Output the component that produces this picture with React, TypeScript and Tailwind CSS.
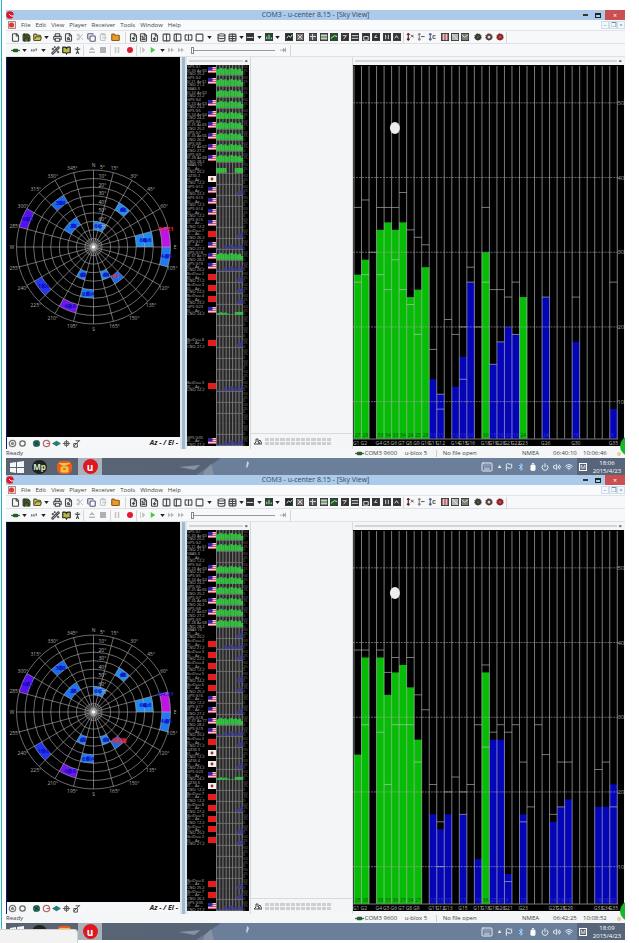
import type { ReactNode } from 'react';
import {
  File, Save, FolderOpen, Printer, FileSearch, Scissors, Copy, ClipboardPaste, Folder,
  FileUp, FileText, FileDown, Columns2, PanelLeft, SquareSplitHorizontal, Square,
  Database, Table, BatteryFull, Flag, Bluetooth, Volume2, Wifi, Power, Keyboard,
  Wand2, BookOpen, PersonStanding,
} from 'lucide-react';

type Bar = [col: number, value: number, color?: 'g' | 'b'];
type Tick = [col: number, value: number];
type Row = { flag?: 'us' | 'cn' | 'jp'; text?: boolean; fill?: 'full' | 'split' | 'low' | 'blue' | 'dim' };

const GREEN = '#06bd06';
const BLUE = '#0505b8';

const barsA: Bar[] = [
  [0, 27, 'g'], [1, 29, 'g'], [3, 33, 'g'], [4, 34, 'g'], [5, 33, 'g'], [6, 34, 'g'], [7, 24, 'g'], [8, 25, 'g'],
  [9, 28, 'g'], [10, 13], [11, 11], [13, 12], [14, 16], [15, 26], [17, 30, 'g'], [18, 15], [19, 18], [20, 20],
  [21, 19], [22, 24, 'g'], [25, 24], [29, 18], [34, 9],
];
const ticksA: Tick[] = [
  [0, 36], [0, 26], [1, 37], [1, 27], [2, 30], [3, 36], [3, 27], [4, 36], [4, 25], [5, 36], [5, 29], [6, 38], [6, 25],
  [7, 33], [7, 23], [8, 32], [8, 19], [9, 31], [10, 17], [11, 9], [11, 11], [12, 21], [13, 19], [14, 20], [14, 13],
  [15, 28], [15, 26], [16, 20], [17, 36], [17, 26], [18, 25], [18, 15], [19, 25], [19, 18], [20, 24], [21, 26],
  [21, 19], [25, 24], [29, 24], [34, 26],
];
const barsB: Bar[] = [
  [0, 25, 'g'], [1, 38, 'g'], [3, 38, 'g'], [4, 33, 'g'], [5, 36, 'g'], [6, 37, 'g'], [7, 34, 'g'], [8, 27, 'g'],
  [10, 17], [11, 15], [12, 17], [14, 17], [16, 11], [17, 36, 'g'], [18, 27], [19, 27], [20, 9], [22, 17], [26, 16],
  [27, 18], [28, 19], [32, 18], [33, 18], [34, 21],
];
const ticksB: Tick[] = [
  [0, 39], [1, 39], [1, 29], [3, 39], [3, 28], [4, 36], [4, 21], [5, 38], [5, 29], [6, 29], [7, 38], [7, 29], [8, 33],
  [8, 24], [9, 31], [10, 21], [11, 16], [11, 10], [12, 20], [13, 22], [14, 20], [14, 17], [15, 21], [16, 29], [17, 37],
  [17, 26], [18, 28], [19, 29], [20, 28], [20, 8], [21, 29], [22, 24], [22, 16], [23, 18], [24, 29], [25, 25],
  [26, 17], [27, 24], [27, 18], [28, 24], [32, 23], [33, 24], [34, 18],
];

const us = (fill?: Row['fill']): Row => ({ flag: 'us', text: true, fill });
const cn = (fill?: Row['fill']): Row => ({ flag: 'cn', text: true, fill });
const jp = (fill?: Row['fill']): Row => ({ flag: 'jp', text: true, fill });
const none = (fill?: Row['fill']): Row => ({ text: true, fill });
const empty: Row = {};

const rowsA: Row[] = [
  us('full'), us('full'), none('full'), us('full'), us('full'), us('full'), us('full'), us('full'), us('full'),
  none('split'), jp(), us('dim'), us(), us(), us(), cn('dim'), us('blue'), us('full'), us('blue'), cn('dim'),
  cn('dim'), cn('dim'), us('low'), empty, empty, cn('dim'), empty, empty, empty, cn('blue'), empty, empty, empty,
  empty, us('blue'),
];
const rowsB: Row[] = [
  us('full'), us('full'), none(), us('full'), us('full'), us('full'), us('full'), us('full'), us('full'), none('dim'),
  cn('blue'), cn('dim'), cn(), cn('dim'), cn('dim'), us(), us('dim'), us('full'), us('blue'), cn('dim'), jp(),
  jp('dim'), us('low'), jp(), cn(), cn('dim'), cn(), cn('dim'), cn('dim'), empty, empty, empty, cn('dim'),
  cn('dim'), us('blue'),
];

const W = 7.54;
const yOf = (v: number) => 374 - (v - 5) * 7.47;

function SignalChart({ bars, ticks }: { bars: Bar[]; ticks: Tick[] }) {
  return (
    <svg viewBox="0 0 272 381" preserveAspectRatio="none" className="block h-[381px] w-full bg-black" role="img" aria-label="Signal levels">
      {bars.map(([c, v, k]) => (
        <rect key={c} x={1 + c * W} y={yOf(v)} width={W} height={374 - yOf(v)} fill={k === 'g' ? GREEN : BLUE} />
      ))}
      {Array.from({ length: 36 }, (_, i) => (
        <line key={i} x1={1 + i * W} x2={1 + i * W} y1="1" y2="374" stroke="#c8c8c8" strokeOpacity=".62" strokeWidth="1" />
      ))}
      {[50, 40, 30, 20, 10].map((v) => (
        <g key={v}>
          <line x1="0" x2="266" y1={yOf(v)} y2={yOf(v)} stroke="#a8a8a8" strokeOpacity=".6" strokeWidth="1" strokeDasharray="2 1" />
          <text x="265" y={yOf(v) + 2} fontSize="6" fill="#a0a0a0">{v}</text>
        </g>
      ))}
      {ticks.map(([c, v], i) => (
        <line key={i} x1={1 + c * W} x2={1 + (c + 1) * W} y1={yOf(v)} y2={yOf(v)} stroke="#c8c8c8" strokeOpacity=".6" strokeWidth="1" />
      ))}
      <line x1="0" x2="266" y1="374" y2="374" stroke="#777" />
      {bars.map(([c, v, k]) => (
        <text key={c} x={2 + c * W} y="372" fontSize="5" fill={k === 'g' ? '#064d06' : '#3434d8'}>{v}</text>
      ))}
      {bars.map(([c]) => (
        <text key={c} x={c * W} y="380" fontSize="5" fill="#b5b5b5">{'G' + (c + 1)}</text>
      ))}
      <ellipse cx="42" cy="63" rx="5" ry="6" fill="#eee" />
    </svg>
  );
}

const CX = 87;
const CY = 190;
const RING = 8.6;
const pt = (az: number, r: number) => {
  const a = (az * Math.PI) / 180;
  return [CX + r * Math.sin(a), CY - r * Math.cos(a)];
};
const sector = (a0: number, a1: number, k0: number, k1: number) => {
  const r0 = k0 * RING;
  const r1 = k1 * RING;
  const [x1, y1] = pt(a0, r0);
  const [x2, y2] = pt(a0, r1);
  const [x3, y3] = pt(a1, r1);
  const [x4, y4] = pt(a1, r0);
  return `M${x1} ${y1}L${x2} ${y2}A${r1} ${r1} 0 0 1 ${x3} ${y3}L${x4} ${y4}A${r0} ${r0} 0 0 0 ${x1} ${y1}Z`;
};
const cells: [number, number, number, number, string, string][] = [
  [315, 330, 6, 7, '#1769ee', '328'], [285, 300, 8, 9, '#5a10ee', '4.62'], [300, 330, 3, 4, '#1c73ef', '28'],
  [0, 30, 2, 3, '#2487f0', '6'], [30, 45, 5, 6, '#278bee', '66'], [75, 90, 5, 7, '#208bee', '68.6'],
  [75, 90, 8, 9, '#c014e6', ''], [90, 105, 8, 9, '#2278ef', '4.05'], [195, 210, 3, 4, '#2180ec', '63'],
  [180, 195, 5, 6, '#1c78ee', '68 A'], [150, 165, 3, 4, '#218cf0', '64'], [135, 150, 4, 5, '#176cec', ''],
  [225, 240, 7, 8, '#2435ef', '11.6'], [195, 210, 7, 8, '#7415e8', '42.8'],
];
const azLabels = ['N', '15°', '30°', '45°', '60°', '', 'E', '105°', '120°', '135°', '150°', '165°', 'S', '195°', '210°', '225°', '240°', '255°', 'W', '285°', '300°', '315°', '330°', '345°'];

function SkyView({ second }: { second: boolean }) {
  return (
    <svg viewBox="0 0 174 380" className="block h-[380px] w-full bg-black" role="img" aria-label="Sky view">
      {cells.map(([a, b, c, d, f], i) => <path key={i} d={sector(a, b, c, d)} fill={f} />)}
      {Array.from({ length: 9 }, (_, i) => (
        <circle key={i} cx={CX} cy={CY} r={(i + 1) * RING} fill="none" stroke="#aaa" strokeOpacity=".7" strokeWidth=".9" />
      ))}
      {azLabels.map((l, i) => {
        const [x, y] = pt(i * 15, 9 * RING);
        const [tx, ty] = pt(i * 15, 82);
        return (
          <g key={i}>
            <line x1={CX} y1={CY} x2={x} y2={y} stroke="#aaa" strokeOpacity=".7" strokeWidth=".9" />
            {l && <text x={tx} y={ty + 2} fontSize="5" fill="#aaa" textAnchor="middle">{l}</text>}
          </g>
        );
      })}
      {cells.map(([a, b, c, d, , t], i) => {
        const [x, y] = pt((a + b) / 2, ((c + d) / 2) * RING);
        return (
          <g key={i}>
            {t && <circle cx={x + 1} cy={y} r="2.4" fill="#0716c8" fillOpacity=".75" />}
            {t && <text x={t === '6' ? x - 3 : x + 1} y={y + 2} fontSize="6" fontWeight="bold" fill="#1010c4" textAnchor="middle">{t}</text>}
          </g>
        );
      })}
      {['5°', '10°', '20°', '30°', '40°', '50°', '60°', '70°'].map((l, i) => (
        <text key={l} x={i === 7 ? CX + 11 : CX + 9} y={CY - 79 + i * RING + 1} fontSize="5" fill="#bbb" textAnchor="middle">{l}</text>
      ))}
      <circle cx={CX} cy={CY} r="8" fill="#fff" fillOpacity=".12" />
      <circle cx={CX} cy={CY} r="4" fill="#fff" fillOpacity=".25" />
      <circle cx={CX} cy={CY} r="1.5" fill="#fff" />
      <text x="160" y={CY - 16} fontSize="6" fontWeight="bold" textAnchor="middle" fill={second ? '#2020d8' : '#f02030'}>64.21</text>
      {second && <rect x="106" y={CY + 26} width="14" height="5" fill="#e03048" fillOpacity=".6" />}
      <text x={second ? 114 : 109} y={CY + 31} fontSize="6" fontWeight="bold" textAnchor="middle" fill="#e82540">{second ? '62.6' : '62'}</text>
    </svg>
  );
}

function FlagMark({ kind }: { kind?: Row['flag'] }) {
  return (
    <svg viewBox="0 0 8 6" className="h-[6px] w-[8px] shrink-0 self-center" aria-hidden="true">
      {kind === 'us' && (
        <>
          <rect width="8" height="6" fill="#e9c9d6" />
          <path d="M0 1.5h8M0 3.5h8M0 5.5h8" stroke="#d04858" strokeWidth=".9" />
          <rect width="4.5" height="3.4" fill="#2725a8" />
        </>
      )}
      {kind === 'cn' && <rect width="8" height="6" fill="#e31c1c" />}
      {kind === 'jp' && (
        <>
          <rect width="8" height="6" fill="#f6f0ea" />
          <circle cx="4" cy="3" r="1.4" fill="#8a3030" />
        </>
      )}
    </svg>
  );
}

function MiniChart({ fill, seed }: { fill: Row['fill']; seed: number }) {
  const heights = Array.from({ length: 13 }, (_, i) => {
    const n = (i * 7 + seed * 5) % 5;
    if (fill === 'full') return i === 12 ? 4 : 5.5 + n * 0.4;
    if (fill === 'split') return i > 4 && i < 9 ? 0 : 5;
    if (fill === 'low') return seed === 22 && i < 6 ? 1.5 + n * 0.3 : i > 8 ? 3 : 0.6;
    if (fill === 'blue') return i > 3 ? 2 + n * 0.7 : 1;
    if (fill === 'dim') return i > 9 ? 3 + n * 0.6 : 0;
    return 0;
  });
  const color = fill === 'blue' || fill === 'dim' ? '#3d3d90' : '#33c840';
  return (
    <svg viewBox="0 0 26 11" preserveAspectRatio="none" className="block h-full w-[27px] shrink-0 bg-[#282828]" aria-hidden="true">
      {Array.from({ length: 9 }, (_, i) => (
        <line key={i} x1={0.5 + i * 3.1} x2={0.5 + i * 3.1} y1="0" y2="11" stroke="#777" strokeWidth="1" />
      ))}
      {heights.map((h, i) => <rect key={i} x={i * 2} y={10 - h} width="2.05" height={h} fill={color} fillOpacity=".95" />)}
      <line x1="0" x2="26" y1="10.5" y2="10.5" stroke="#777" strokeWidth=".8" />
    </svg>
  );
}

function SatelliteList({ rows }: { rows: Row[] }) {
  return (
    <ul className="flex h-[381px] w-[62px] flex-col overflow-hidden bg-black text-[4px] leading-[3px] text-[#b4b4b4]">
      {rows.map((r, i) => (
        <li key={i} className="flex min-h-0 flex-1 overflow-hidden">
          <div className="flex w-[21px] shrink-0 flex-col justify-evenly whitespace-nowrap">
            {r.text && (
              <>
                <span>{r.flag === 'cn' ? `BeiDou ${(i % 9) + 1}` : r.flag === 'jp' ? `QZSS ${(i % 9) + 1}` : r.flag ? `GPS G${i + 1}` : `SBAS ${i + 1}`}</span>
                <span>{r.fill === 'full' ? `El ${20 + i} Az ${60 + i}` : 'El -- Az --'}</span>
                <span>CNO {r.fill ? 20 + (i % 9) : 12}.2</span>
              </>
            )}
          </div>
          <FlagMark kind={r.flag} />
          <MiniChart fill={r.fill} seed={i} />
          <div className="flex flex-col justify-evenly text-[#777]">
            <span>50</span>
            <span>25</span>
            <span>0</span>
          </div>
        </li>
      ))}
    </ul>
  );
}

function Btn({ label, children }: { label: string; children: ReactNode }) {
  return (
    <button type="button" aria-label={label} className="flex h-[10px] w-[10px] shrink-0 items-center justify-center">
      {children}
    </button>
  );
}

function Caret() {
  return (
    <button type="button" aria-label="More" className="flex h-[10px] w-[6px] shrink-0 items-center justify-center">
      <svg viewBox="0 0 6 4" className="h-[3px] w-[5px]"><path d="M0 0h6L3 4z" fill="#222" /></svg>
    </button>
  );
}

/* Dark view button with a small coloured drawing inside */
function Tile({ label, color = '#333', mark = 'M2 6l2-3 2 2 2-3' }: { label: string; color?: string; mark?: string }) {
  return (
    <Btn label={label}>
      <svg viewBox="0 0 9 9" className="h-[8px] w-[8px]">
        <rect x=".5" y=".5" width="8" height="8" fill={color} stroke="#333" />
        <path d={mark} stroke="#dcdcdc" strokeWidth="1.1" fill="none" />
      </svg>
    </Btn>
  );
}

function Node({ label, color, mark }: { label: string; color: string; mark: string }) {
  return (
    <Btn label={label}>
      <svg viewBox="0 0 9 9" className="h-[8px] w-[9px]" fill="none">
        <path d="M2 0v8M.5 2L2 .5 3.5 2M.5 6.5L2 8l1.500-1.500" stroke={color} strokeWidth="1.3" />
        <path d={mark} stroke="#555" strokeWidth="1.1" />
      </svg>
    </Btn>
  );
}

function Gear({ label, color, body }: { label: string; color: string; body: string }) {
  return (
    <Btn label={label}>
      <svg viewBox="0 0 9 9" className="h-[8px] w-[8px]">
        <path d="M3 1h3l2 2v3L6 8H3L1 6V3z" fill={body} stroke={body} strokeDasharray="1.5 1" />
        <circle cx="4.5" cy="4.5" r="1.7" fill={color} />
      </svg>
    </Btn>
  );
}

const Bar1 = () => <span className="h-[11px] w-px shrink-0 bg-[#d4d6da]" />;
const ic = 'h-[9px] w-[9px] stroke-3 text-[#4a4a4a]';
const pale = 'h-[8px] w-[8px] stroke-3 text-[#bdbdbd]';

function MainToolbar() {
  return (
    <div className="flex h-[13px] items-center overflow-hidden border-t border-[#e1e3e6] bg-[#f7f8f9] pl-[4px]" role="toolbar" aria-label="Main">
      <div className="flex w-[39px] shrink-0 justify-between">
        <Btn label="New"><File className={ic} /></Btn>
        <Btn label="Save"><Save className="h-[9px] w-[9px] fill-[#4f6b2c] stroke-3 text-[#2f3a20]" /></Btn>
        <Btn label="Open"><FolderOpen className="h-[9px] w-[9px] fill-[#c9c35a] stroke-3 text-[#55532c]" /></Btn>
        <Caret />
      </div>
      <div className="ml-[3px] flex w-[21px] shrink-0 justify-between">
        <Btn label="Print"><Printer className={ic} /></Btn>
        <Btn label="Preview"><FileSearch className={ic} /></Btn>
      </div>
      <div className="ml-[2px] flex w-[33px] shrink-0 items-center justify-between">
        <Btn label="Cut"><Scissors className={pale} /></Btn>
        <Btn label="Copy"><Copy className="h-[9px] w-[9px] stroke-3 text-[#555a78]" /></Btn>
        <Btn label="Paste"><ClipboardPaste className={pale} /></Btn>
      </div>
      <div className="ml-[2px] flex w-[16px] shrink-0 items-center justify-between">
        <Btn label="Folder"><Folder className="h-[9px] w-[9px] fill-[#e89b28] stroke-3 text-[#8d5a17]" /></Btn>
        <Bar1 />
      </div>
      <div className="ml-[2px] flex w-[31px] shrink-0 justify-between">
        <Btn label="Load"><FileUp className={ic} /></Btn>
        <Btn label="Text"><FileText className={ic} /></Btn>
        <Btn label="Store"><FileDown className={ic} /></Btn>
      </div>
      <div className="ml-[2px] flex w-[51px] shrink-0 justify-between">
        <Btn label="Columns"><Columns2 className={ic} /></Btn>
        <Btn label="Panel"><PanelLeft className={ic} /></Btn>
        <Btn label="Split"><SquareSplitHorizontal className={ic} /></Btn>
        <Btn label="Window"><Square className={ic} /></Btn>
        <Caret />
      </div>
      <div className="ml-[4px] flex w-[65px] shrink-0 justify-between">
        <Btn label="Database"><Database className={ic} /></Btn>
        <Btn label="Table"><Table className={ic} /></Btn>
        <Caret />
        <Tile label="Chart" mark="M1 5h7" />
        <Caret />
        <Tile label="Histogram" color="#174f25" mark="M2 7V4M4.500 7V2M7 7V5" />
        <Caret />
      </div>
      <div className="ml-[3px] flex w-[21px] shrink-0 justify-between">
        <Tile label="Camera" color="#142f20" />
        <Tile label="Deviation" color="#777" mark="M2 2l5 5M7 2L2 7" />
      </div>
      <div className="ml-[3px] flex w-[94px] shrink-0 justify-between">
        <Tile label="Satellites" color="#555" mark="M1 4h7M4 1v7" />
        <Tile label="Table view" color="#739270" mark="M1 3h7M1 6h7" />
        <Tile label="World" color="#175d20" mark="M1 6l4-3 3 1" />
        <Tile label="Compass" mark="M2 3h4L3 7" />
        <Tile label="Speed" mark="M1 3h7M1 6h7" />
        <Tile label="Clock" mark="M2 4h5v4H2z" />
        <Tile label="Altitude" mark="M5 2L3 5h3" />
        <Tile label="Sky" mark="M3 2v5M6 2v5" />
        <Tile label="Signal" mark="M2 6l2-3 2 3" />
      </div>
      <div className="ml-px flex w-[35px] shrink-0 items-center justify-between">
        <Bar1 />
        <Node label="Cold start" color="#5c2424" mark="M5 5l3-3M5 2l3 3" />
        <Node label="Warm start" color="#888" mark="M4 4h4" />
        <Node label="Hot start" color="#5b6788" mark="M8 3H5v3h3" />
      </div>
      <div className="ml-[2px] flex w-[30px] shrink-0 justify-between">
        <Tile label="Debug" color="#b46a70" mark="M3 1v7M6 1v7" />
        <Tile label="Config" color="#b8b8b8" mark="M1 1l7 7" />
        <Tile label="Update" color="#807c74" mark="M1 2l3 3 4-3" />
      </div>
      <div className="ml-[3px] flex w-[34px] shrink-0 items-center justify-between">
        <Gear label="Gear" color="#42634a" body="#3a3532" />
        <Gear label="Messages" color="#f1d0c8" body="#4a3a38" />
        <Gear label="Settings" color="#e24040" body="#7a2424" />
        <Bar1 />
      </div>
    </div>
  );
}

function Plug() {
  return (
    <svg viewBox="0 0 10 5" className="h-[5px] w-[9px]"><path d="M0 2.500h10" stroke="#477347" strokeWidth="1.5" /><rect x="2" y=".5" width="6" height="4" rx="1.5" fill="#275f2c" /></svg>
  );
}

function Shape({ d, color }: { d: string; color: string }) {
  return <svg viewBox="0 0 8 8" className="h-[6px] w-[6px]"><path d={d} fill={color} /></svg>;
}

function PlayerToolbar() {
  return (
    <div className="flex h-[14px] items-center overflow-hidden border-y border-[#dfe1e4] bg-[#f7f8f9] pl-[4px]" role="toolbar" aria-label="Player">
      <div className="flex w-[37px] shrink-0 justify-between">
        <Btn label="Port"><Plug /></Btn>
        <Caret />
        <Btn label="Baud rate"><Shape d="M0 6V3h2v3M3 6V3h2v3M6 5V2h2v3" color="#777" /></Btn>
        <Caret />
      </div>
      <div className="ml-[3px] flex w-[34px] shrink-0 items-center justify-between">
        <Btn label="Autobaud"><Wand2 className={ic} /></Btn>
        <Btn label="Debug messages"><BookOpen className="h-[9px] w-[9px] fill-[#b6b944] stroke-3 text-[#222]" /></Btn>
        <Btn label="Warm"><PersonStanding className={ic} /></Btn>
        <Bar1 />
      </div>
      <div className="ml-[3px] flex w-[35px] shrink-0 items-center justify-between">
        <Btn label="Eject"><Shape d="M4 0l4 4H0zM0 6h8v2H0z" color="#b8b8b8" /></Btn>
        <Btn label="Stop"><Shape d="M0 0h8v8H0z" color="#b0b0b0" /></Btn>
        <Bar1 />
        <Btn label="Pause"><Shape d="M1 0h2v8H1zM5 0h2v8H5z" color="#c4c4c4" /></Btn>
      </div>
      <div className="ml-[3px] flex w-[51px] shrink-0 items-center justify-between">
        <Btn label="Record"><Shape d="M4 0a4 4 0 100 8 4 4 0 000-8" color="#e01b2c" /></Btn>
        <Bar1 />
        <Btn label="Step"><Shape d="M0 0h1v8H0zM3 0l4 4-4 4z" color="#c0c0c0" /></Btn>
        <Btn label="Play"><Shape d="M1 0l6 4-6 4z" color="#41cf41" /></Btn>
        <Caret />
        <Btn label="Forward"><Shape d="M0 1l4 3-4 3zM4 1l4 3-4 3z" color="#b8b8b8" /></Btn>
      </div>
      <Btn label="End"><Shape d="M0 1l4 3-4 3zM4 1l4 3-4 3z" color="#b8b8b8" /></Btn>
      <input
        type="range"
        aria-label="Position"
        min={0}
        max={100}
        defaultValue={0}
        className="ml-[5px] h-[8px] w-[84px] shrink-0 appearance-none bg-transparent [&::-webkit-slider-runnable-track]:h-px [&::-webkit-slider-runnable-track]:bg-[#999] [&::-webkit-slider-thumb]:-mt-[3px] [&::-webkit-slider-thumb]:h-[7px] [&::-webkit-slider-thumb]:w-[3px] [&::-webkit-slider-thumb]:appearance-none [&::-webkit-slider-thumb]:border [&::-webkit-slider-thumb]:border-[#888] [&::-webkit-slider-thumb]:bg-white"
      />
      <div className="ml-[3px] flex w-[13px] shrink-0 items-center justify-between">
        <Btn label="Last"><Shape d="M0 3.500h4V1l3 3-3 3V4.500H0zM7 1h1v6H7z" color="#999" /></Btn>
        <Bar1 />
      </div>
    </div>
  );
}

function Grip() {
  return (
    <div className="flex h-[8px] items-center gap-[2px] px-[2px]">
      <span className="h-[2px] flex-1 border-y border-[#d5d5d5]" />
      <button type="button" aria-label="Close pane" className="text-[6px] leading-[8px] font-bold text-[#333]">×</button>
    </div>
  );
}

function SkyToolbar() {
  return (
    <div className="flex h-[12px] items-center bg-[#f6f7f8] pr-[2px]">
      {[
        ['Rings', '#777', 'M5 1.500a3.500 3.500 0 100 7 3.500 3.500 0 000-7M5 4a1 1 0 100 2 1 1 0 000-2'],
        ['Track', '#666', 'M5 2a3 3 0 100 6 3 3 0 000-6'],
      ].map(([l, c, d]) => (
        <Btn key={l} label={l}><svg viewBox="0 0 10 10" className="h-[9px] w-[9px]"><path d={d} fill="none" stroke={c} strokeWidth="1.4" /></svg></Btn>
      ))}
      <span className="w-[4px]" />
      <Btn label="World"><svg viewBox="0 0 10 10" className="h-[9px] w-[9px]"><circle cx="5" cy="5" r="4" fill="#287367" /><path d="M2 3l6 4M3 8l4-6" stroke="#222" /></svg></Btn>
      <Btn label="Target"><svg viewBox="0 0 10 10" className="h-[9px] w-[9px]" fill="none"><circle cx="5" cy="5" r="3.5" stroke="#b16d72" strokeWidth="1.4" /><path d="M5 5h3" stroke="#a44" /></svg></Btn>
      <Btn label="Connection"><svg viewBox="0 0 10 10" className="h-[9px] w-[9px]"><path d="M0 5l5-3 5 3-5 3z" fill="#238070" /></svg></Btn>
      <Btn label="Cross"><svg viewBox="0 0 10 10" className="h-[9px] w-[9px]"><path d="M5 1v8M1 5h8M3 3h4v4H3z" fill="none" stroke="#555" /></svg></Btn>
      <Btn label="Scale"><svg viewBox="0 0 10 10" className="h-[9px] w-[9px]"><path d="M2 8l6-6M4 2h5M2 5v4h4V5z" fill="none" stroke="#444" /></svg></Btn>
      <span className="flex-1 text-right text-[7px] leading-[10px] font-bold text-[#222] italic">Az - / El -</span>
    </div>
  );
}

function StatusBar({ t1, t2 }: { t1: string; t2: string }) {
  return (
    <div className="flex h-[9px] items-center bg-[#f5f6f7] text-[6px] leading-[9px] whitespace-nowrap text-[#444]">
      <span className="flex-1">Ready</span>
      <div className="flex w-[44%] items-center pl-[2px]">
        <Plug />
        <span className="ml-px w-[40px]">COM3 9600</span>
        <span className="w-[31px]">u-blox 5</span>
        <span className="mr-[6px] h-[7px] w-px bg-[#ccc]" />
        <span className="flex-1">No file open</span>
        <span className="w-[31px]">NMEA</span>
        <span className="w-[30px]">{t1}</span>
        <span className="w-[34px]">{t2}</span>
        <span className="mr-[4px] h-[4px] w-[4px] rounded-full bg-[#e9cd94]" />
      </div>
    </div>
  );
}

function Taskbar({ clock }: { clock: string }) {
  const t = 'h-[8px] w-[8px] shrink-0 text-[#e4edf5] stroke-3';
  return (
    <div className="relative flex h-[17px] items-center overflow-hidden bg-linear-to-r from-[#5a6370] via-[#56647a] to-[#6f87a8]">
      <svg viewBox="0 0 540 17" preserveAspectRatio="none" className="absolute inset-y-0 right-0 h-full w-[85%]" aria-hidden="true">
        <path d="M125 0h415v17H100z" fill="#6b7f9b" />
        <path d="M82 9l22-2-6 5zM108 13l7-7 3 11h-11z" fill="#8793a4" />
        <path d="M152 3l2 2-2 5-1-1z" fill="#cbd5df" />
      </svg>
      <button type="button" aria-label="Start" className="relative flex h-full w-[22px] items-center justify-center">
        <svg viewBox="0 0 14 12" className="h-[12px] w-[14px]"><path d="M0 2l6-1v5H0zM7 1l7-1v6H7zM0 7h6v5l-6-1zM7 7h7v5H7z" fill="#f4f7fa" /></svg>
      </button>
      <button type="button" className="relative ml-[4px] flex h-[14px] w-[15px] items-center justify-center rounded-full bg-[#1d2420] text-[8px] leading-[12px] font-bold text-[#dce8c4]">Mp</button>
      <button type="button" aria-label="Mail" className="relative ml-[10px] flex h-[14px] w-[15px] items-center justify-center">
        <svg viewBox="0 0 15 14" className="h-[14px] w-[15px]"><rect width="15" height="13" y="1" rx="5" fill="#ee5b16" /><path d="M2 3l5 3 6-3M4 7h7v5H4z" fill="#f5c34a" stroke="#f5c34a" /><path d="M6 9h3" stroke="#bd3d16" /></svg>
      </button>
      <button type="button" className="relative ml-[6px] flex h-full w-[24px] items-center justify-center bg-[#a9b1bb]">
        <span className="flex h-[15px] w-[15px] items-center justify-center rounded-full bg-[#df1820] text-[10px] leading-[14px] font-bold text-white">u</span>
      </button>
      <div className="relative ml-auto flex h-full items-center gap-[4px]">
        <Keyboard className="h-[12px] w-[14px] text-[#e8edf2]" />
        <span className="text-[6px] text-white">▴</span>
        <Flag className={t} />
        <Bluetooth className="h-[8px] w-[8px] text-[#9fd2ff] stroke-3" />
        <BatteryFull className="h-[8px] w-[8px] -rotate-90 fill-white stroke-3 text-white" />
        <Power className={t} />
        <Volume2 className={t} />
        <Wifi className={t} />
        <div className="flex h-full items-center gap-[4px] bg-[#56657a] px-[2px]">
          <span className="flex h-[8px] w-[8px] items-center justify-center border border-white text-[6px] leading-[6px] text-white">M</span>
          <time className="w-[32px] text-center text-[6px] leading-[8px] text-white">{clock}<br />2015/4/23</time>
        </div>
      </div>
    </div>
  );
}

type WindowProps = { bars: Bar[]; ticks: Tick[]; rows: Row[]; t1: string; t2: string; clock: string; second?: boolean };

function AppWindow({ bars, ticks, rows, t1, t2, clock, second = false }: WindowProps) {
  return (
    <section className="w-full">
      <header className="relative flex h-[10px] items-center justify-center bg-[#accae9]">
        <svg viewBox="0 0 8 8" className="absolute top-px left-0 h-[8px] w-[8px]" aria-hidden="true"><circle cx="4" cy="4" r="3.8" fill="#dd1828" /><path d="M3 3l2 2 3 0" stroke="#fff" fill="none" /></svg>
        <h1 className="text-[7px] leading-[10px] text-[#33485f]">COM3 - u-center 8.15 - [Sky View]</h1>
        <div className="absolute inset-y-0 right-0 flex items-center">
          <button type="button" aria-label="Minimize" className="mr-[7px] h-[2px] w-[5px] bg-[#333]" />
          <button type="button" aria-label="Restore" className="mr-[4px] h-[5px] w-[6px] border border-t-2 border-[#222]" />
          <button type="button" aria-label="Close" className="h-full w-[20px] bg-[#c94f50] text-[7px] leading-[9px] text-white">×</button>
        </div>
      </header>
      <nav className="flex h-[10px] items-center gap-[5px] bg-[#f9fafb] pl-[2px] text-[6px] leading-[9px] text-[#444]">
        <svg viewBox="0 0 8 8" className="h-[8px] w-[8px]" aria-hidden="true"><rect x=".5" y=".5" width="7" height="7" fill="#f5d8d4" stroke="#b98a84" /><circle cx="3.5" cy="4" r="2.5" fill="#d73a3a" /></svg>
        <div className="flex flex-1 gap-[5px]">
          {['File', 'Edit', 'View', 'Player', 'Receiver', 'Tools', 'Window', 'Help'].map((m) => (
            <button type="button" key={m}>{m}</button>
          ))}
        </div>
        <div className="flex">
          {['–', '❐', '×'].map((m) => (
            <button type="button" key={m} className="h-[8px] w-[8px] border border-[#cddfee] bg-[#f3f8fc] text-center text-[6px] leading-[6px] text-[#5e7388]">{m}</button>
          ))}
        </div>
      </nav>
      <MainToolbar />
      <PlayerToolbar />
      <main className="flex h-[392px] bg-[#f4f5f7]">
        <div className="w-[174px] shrink-0 border-l border-[#16166c]">
          <SkyView second={second} />
          <SkyToolbar />
        </div>
        <div className="w-[7px] shrink-0 border-x-2 border-[#dce4ec] bg-[#9fb9d0]" />
        <div className="w-[64px] shrink-0 border-r border-[#d5d7da]">
          <Grip />
          <SatelliteList rows={rows} />
        </div>
        <div className="flex min-w-0 flex-1 flex-col justify-end border-r border-[#d8dadd]">
          <div className="flex h-[16px] items-center gap-[3px] border-t border-[#d8dadd] pl-[3px]">
            <svg viewBox="0 0 8 7" className="h-[7px] w-[8px]" aria-hidden="true"><path d="M0 6h8L6 2 4 4V1H2v3z" fill="none" stroke="#444" /><circle cx="5" cy="5" r="1" fill="#444" /></svg>
            <div className="grid w-[66px] grid-cols-13 gap-px">
              {Array.from({ length: 26 }, (_, i) => <span key={i} className="h-[3px] bg-[#cfcfcf]" />)}
            </div>
          </div>
        </div>
        <div className="relative w-[44%] shrink-0 pr-px">
          <Grip />
          <SignalChart bars={bars} ticks={ticks} />
          <div className="absolute right-0 -bottom-[7px] z-10 h-[20px] w-[5px] overflow-hidden">
            <span className="block h-[20px] w-[20px] rounded-full bg-[#17b72c]" />
          </div>
        </div>
      </main>
      <StatusBar t1={t1} t2={t2} />
      <Taskbar clock={clock} />
    </section>
  );
}

export default function App() {
  return (
    <div className="relative bg-white pt-[10px] pr-[14px] pb-[3px] pl-[6px] font-['Open_Sans','Noto_Sans',sans-serif]">
      <span className="absolute inset-y-0 left-px w-px bg-[#22b5c4]" />
      <AppWindow bars={barsA} ticks={ticksA} rows={rowsA} t1="06:40:10" t2="10:06:46" clock="18:06" />
      <AppWindow bars={barsB} ticks={ticksB} rows={rowsB} t1="06:42:25" t2="10:08:52" clock="18:09" second />
      <div className="absolute bottom-0 left-0 h-[14px] w-[78px] rounded-tr border-t border-r border-[#cfd1d4] bg-[#f2f2f2]" />
    </div>
  );
}
